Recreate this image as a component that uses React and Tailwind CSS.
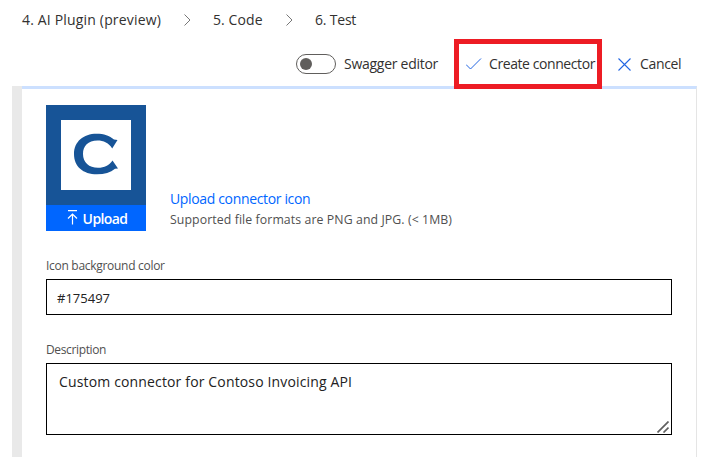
function Chevron() {
  return (
    <svg className="h-3 w-[7px] shrink-0" viewBox="0 0 7 12" fill="none" stroke="#777" strokeWidth="1">
      <path d="M.5.5 6 6 .5 11.5" />
    </svg>
  );
}

function Logo() {
  return (
    <div className="flex h-[100px] w-[100px] items-center justify-center bg-[#175497]">
      <svg className="h-[70px] w-[70px] bg-white" viewBox="0 0 70 70" fill="#175497">
        <path d="M56.500 20 51.200 28.500 C48 23 42.500 20.500 36.500 20.500 C27 20.500 22 26 22 34 C22 42.500 28 47.800 37 47.800 C43.500 47.800 48 45.500 51.500 40.500 L57 48.500 L54 48.800 C49.500 52.500 43.500 54.300 36 54.300 C22 54.300 13 46.500 13 34 C13 21.500 22.500 13.700 35.500 13.700 C43 13.700 48.500 15.500 53 19.500 Z" />
      </svg>
    </div>
  );
}

export default function App() {
  return (
    <div className="flex h-[457px] w-[715px] flex-col overflow-hidden bg-white font-['Open_Sans','Noto_Sans',sans-serif] text-[14px] leading-5 text-[#323130]">
      <nav className="flex h-10 items-center pl-[22px]">
        <span className="w-[162px] whitespace-nowrap tracking-[0.17px]">4. AI Plugin (preview)</span>
        <Chevron />
        <span className="ml-[22px] w-[73px] whitespace-nowrap tracking-[0.1px]">5. Code</span>
        <Chevron />
        <span className="ml-[22px] whitespace-nowrap tracking-[-0.2px]">6. Test</span>
      </nav>
      <div className="relative flex h-[46px] items-center pb-0.5 pl-[296px] pt-1">
        <span className="flex h-5 w-10 items-center rounded-full border border-[#605e5c] pl-[3px]">
          <span className="h-3 w-3 rounded-full bg-[#605e5c]" />
        </span>
        <span className="ml-2 w-[122px] whitespace-nowrap tracking-[-0.27px]">Swagger editor</span>
        <svg className="h-4 w-4" viewBox="0 0 16 16" fill="none" stroke="#2266e3" strokeWidth="1">
          <path d="M0 8.500 4.500 13 15 2.500" />
        </svg>
        <span className="ml-[7px] w-[129px] whitespace-nowrap tracking-[-0.42px]">Create connector</span>
        <svg className="mt-px h-[13px] w-[13px]" viewBox="0 0 13 13" fill="none" stroke="#2266e3" strokeWidth="1.100">
          <path d="m.5.5 12 12m0-12-12 12" />
        </svg>
        <span className="ml-[9px] whitespace-nowrap tracking-[-0.35px]">Cancel</span>
        <div className="absolute left-[454px] top-[-1px] h-[50px] w-[148px] border-[5px] border-[#ed1c24]" />
      </div>
      <div className="flex flex-1 pl-3">
        <div className="w-2.5 bg-[#e9e9e9]" />
        <main className="w-[675px] border-r border-t-[3px] border-r-[#e5e5e5] border-t-[#cce0ff] pl-6 pt-4">
          <div className="flex h-[126px] items-end">
            <div className="w-[100px]">
              <Logo />
              <div className="flex h-[26px] items-center justify-center bg-[#0066ff] pl-0.5 pt-0.5 font-semibold text-white">
                <svg className="mb-1 mr-[5px] h-[15px] w-[11px]" viewBox="0 0 11 15" fill="none" stroke="white" strokeWidth="1.200">
                  <path d="M1 .7h9M5.500 14.500V4M1 8.500l4.500-4.500L10 8.500" />
                </svg>
                <span className="tracking-[-0.6px]">Upload</span>
              </div>
            </div>
            <div className="ml-6 pb-px">
              <div className="mb-px whitespace-nowrap tracking-[-0.35px] text-[#0066ff]">Upload connector icon</div>
              <div className="whitespace-nowrap text-[12.3px] tracking-[0.09px] text-[#505050]">Supported file formats are PNG and JPG. (&lt; 1MB)</div>
            </div>
          </div>
          <div className="mt-[25px] h-[23px] text-[12px] tracking-[-0.29px] text-[#505050]">Icon background color</div>
          <div className="flex h-9 w-[626px] items-center border border-black pl-2.5 pt-0.5 text-[13px] text-[#222]">#175497</div>
          <div className="mt-[25px] h-[23px] text-[12px] tracking-[-0.36px] text-[#505050]">Description</div>
          <div className="flex h-[72px] w-[626px] justify-between border border-black pl-3 pt-2 text-[14px] text-[#222]">
            <span className="tracking-[0.15px]">Custom connector for Contoso Invoicing API</span>
            <svg className="mb-px mr-0.5 h-3 w-3 self-end" viewBox="0 0 12 12" stroke="#606060" strokeWidth="1.700">
              <path d="M.5 11.500 11.500 .5M6.500 11.500 11.500 6.500" />
            </svg>
          </div>
        </main>
      </div>
    </div>
  );
}
